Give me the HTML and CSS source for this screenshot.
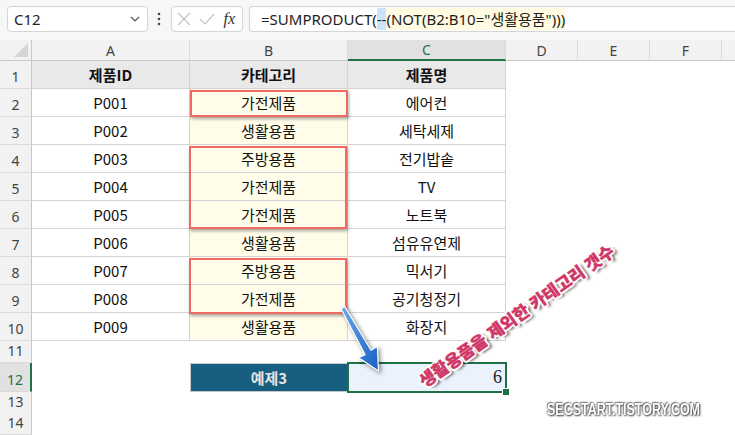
FILE: index.html
```html
<!DOCTYPE html>
<html lang="ko">
<head>
  <meta charset="UTF-8" />
  <meta name="viewport" content="width=device-width, initial-scale=1.0" />
  <title>SUMPRODUCT NOT 예제</title>
  <link rel="stylesheet" href="styles.css">
</head>
<body>

  <div class="formula-bar">
    <div class="name-box">
      <span>C12</span>
      <svg class="chevron" width="10" height="6" viewBox="0 0 10 6"><path d="M1 1 L5 5 L9 1" fill="none" stroke="#555" stroke-width="1.2"/></svg>
    </div>
    <svg class="dots" width="4" height="14" viewBox="0 0 4 14"><circle cx="2" cy="2" r="1.3" fill="#444"/><circle cx="2" cy="7" r="1.3" fill="#444"/><circle cx="2" cy="12" r="1.3" fill="#444"/></svg>
    <div class="fx-box">
      <svg width="14" height="14" viewBox="0 0 14 14"><path d="M1 1 L13 13 M13 1 L1 13" stroke="#c4c4c4" stroke-width="1.2"/></svg>
      <svg width="16" height="12" viewBox="0 0 16 12"><path d="M1 6 L6 11 L15 1" fill="none" stroke="#c4c4c4" stroke-width="1.2"/></svg>
      <span class="fx">fx</span>
    </div>
    <div class="formula">=SUMPRODUCT(<span class="hl-blue">--</span><span class="hl-yellow">(NOT(B2:B10="생활용품")))</span></div>
  </div>

  <div class="sheet">
    <div class="row col-heads">
      <div class="corner"><svg width="14" height="14" viewBox="0 0 14 14"><path d="M14 0 L14 14 L0 14 Z" fill="#d6d6d6"/></svg></div>
      <div class="ch">A</div>
      <div class="ch">B</div>
      <div class="ch active">C</div>
      <div class="ch narrow">D</div>
      <div class="ch narrow">E</div>
      <div class="ch narrow">F</div>
      <div class="ch rest"></div>
    </div>

    <div class="row">
      <div class="rh">1</div>
      <div class="cell head">제품ID</div>
      <div class="cell head">카테고리</div>
      <div class="cell head">제품명</div>
    </div>
    <div class="row">
      <div class="rh">2</div>
      <div class="cell">P001</div>
      <div class="cell cat">가전제품</div>
      <div class="cell">에어컨</div>
    </div>
    <div class="row">
      <div class="rh">3</div>
      <div class="cell">P002</div>
      <div class="cell cat">생활용품</div>
      <div class="cell">세탁세제</div>
    </div>
    <div class="row">
      <div class="rh">4</div>
      <div class="cell">P003</div>
      <div class="cell cat">주방용품</div>
      <div class="cell">전기밥솥</div>
    </div>
    <div class="row">
      <div class="rh">5</div>
      <div class="cell">P004</div>
      <div class="cell cat">가전제품</div>
      <div class="cell">TV</div>
    </div>
    <div class="row">
      <div class="rh">6</div>
      <div class="cell">P005</div>
      <div class="cell cat">가전제품</div>
      <div class="cell">노트북</div>
    </div>
    <div class="row">
      <div class="rh">7</div>
      <div class="cell">P006</div>
      <div class="cell cat">생활용품</div>
      <div class="cell">섬유유연제</div>
    </div>
    <div class="row">
      <div class="rh">8</div>
      <div class="cell">P007</div>
      <div class="cell cat">주방용품</div>
      <div class="cell">믹서기</div>
    </div>
    <div class="row">
      <div class="rh">9</div>
      <div class="cell">P008</div>
      <div class="cell cat">가전제품</div>
      <div class="cell">공기청정기</div>
    </div>
    <div class="row">
      <div class="rh">10</div>
      <div class="cell">P009</div>
      <div class="cell cat">생활용품</div>
      <div class="cell">화장지</div>
    </div>

    <div class="row r11">
      <div class="rh">11</div>
    </div>
    <div class="row r12">
      <div class="rh active">12</div>
      <div class="blank"></div>
      <div class="label">예제3</div>
      <div class="result">6</div>
    </div>
    <div class="row r13">
      <div class="rh">13</div>
    </div>
    <div class="row r14">
      <div class="rh">14</div>
    </div>
  </div>

  <!-- highlights drawn over the grid -->
  <div class="mark mark-b2"></div>
  <div class="mark mark-b4"></div>
  <div class="mark mark-b8"></div>
  <div class="selection"><span class="handle"></span></div>

  <svg class="arrow" width="735" height="435" viewBox="0 0 735 435">
    <defs>
      <linearGradient id="arrowFill" x1="0" y1="0" x2="1" y2="1">
        <stop offset="0" stop-color="#6aa9ea"/>
        <stop offset="1" stop-color="#1760c4"/>
      </linearGradient>
    </defs>
    <polygon points="344.8,306.6 371,350.2 377.4,346.6 378.5,371 358.6,357.8 365,354.6 341,308.8"
             fill="url(#arrowFill)" stroke="#fff" stroke-width="1.2" stroke-linejoin="round"/>
  </svg>

  <div class="callout">생활용품을 제외한 카테고리 갯수</div>
  <div class="watermark">SECSTART.TISTORY.COM</div>

</body>
</html>
```

FILE: styles.css
```css
body {
  margin: 0;
  width: 735px;
  height: 435px;
  overflow: hidden;
  position: relative;
  background: #fff;
  font-family: "Noto Sans CJK KR", sans-serif;
  color: #222;
}

/* formula bar */

.formula-bar {
  height: 40px;
  box-sizing: border-box;
  padding: 6px 0 8px 7px;
  display: flex;
  align-items: stretch;
  background: #f7f7f7;
}

.name-box {
  width: 141px;
  box-sizing: border-box;
  background: #fff;
  border: 1px solid #d4d4d4;
  border-radius: 4px;
  display: flex;
  align-items: center;
  justify-content: space-between;
  padding: 0 7px 0 6px;
  font: 15px "Noto Sans", sans-serif;
  color: #222;
}

.dots {
  align-self: center;
  margin: 0 10px 0 9px;
}

.fx-box {
  width: 72px;
  box-sizing: border-box;
  background: #fff;
  border: 1px solid #d4d4d4;
  border-radius: 4px;
  display: flex;
  align-items: center;
  justify-content: space-between;
  padding: 0 7px 0 5px;
}

.fx {
  font: italic 16px "Liberation Serif", serif;
  color: #333;
}

.formula {
  flex: 1;
  margin-left: 6px;
  background: #fff;
  border: 1px solid #d4d4d4;
  border-right: none;
  border-radius: 4px 0 0 4px;
  display: flex;
  align-items: center;
  padding-left: 11px;
  font: 15px "Noto Sans", "Noto Sans CJK KR", sans-serif;
  color: #222;
  white-space: nowrap;
}

.hl-blue,
.hl-yellow {
  display: inline-block;
  line-height: 22px;
}

.hl-blue {
  background: #cce3f7;
}

.hl-yellow {
  background: #fffbe3;
}

/* grid */

.sheet {
  display: flex;
  flex-direction: column;
}

.row {
  display: grid;
  grid-template-columns: 32px 158px 158px 158px 1fr;
  height: 28px;
}

.col-heads {
  grid-template-columns: 32px 158px 158px 158px 72px 72px 72px 1fr;
  height: 21px;
}

.r11 { height: 22px; }
.r12 { height: 29px; }
.r13 { height: 21px; }
.r14 { height: 22px; }

.corner {
  background: #f2f2f2;
  border-right: 1px solid #c8c8c8;
  border-bottom: 1px solid #c8c8c8;
  display: flex;
  align-items: flex-end;
  justify-content: flex-end;
  padding: 0 3px 3px 0;
}

.ch {
  background: #f2f2f2;
  border-right: 1px solid #dadada;
  border-bottom: 1px solid #c8c8c8;
  display: flex;
  align-items: center;
  justify-content: center;
  font: 14px "Noto Sans", sans-serif;
  color: #444;
}

.ch.rest {
  border-right: none;
}

.ch.active {
  background: #e1e1e1;
  border-bottom: 2px solid #217346;
  color: #217346;
}

.rh {
  background: #f2f2f2;
  border-right: 1px solid #c8c8c8;
  border-bottom: 1px solid #dadada;
  display: flex;
  align-items: flex-end;
  justify-content: center;
  padding-bottom: 2px;
  box-sizing: border-box;
  font: 14px "Noto Sans", sans-serif;
  color: #444;
}

.rh.active {
  background: #e1e1e1;
  border-right: 2px solid #217346;
  color: #217346;
}

.cell {
  box-sizing: border-box;
  border-right: 1px solid #d4d4d4;
  border-bottom: 1px solid #d4d4d4;
  display: flex;
  align-items: center;
  justify-content: center;
  font-size: 15px;
  color: #111;
}

.cell.head {
  background: #e9e9e9;
  font-weight: bold;
}

.cell.cat {
  background: #fffde9;
}

.label {
  box-sizing: border-box;
  background: #175e7f;
  border: 1px solid #c8c8c8;
  display: flex;
  align-items: center;
  justify-content: center;
  font-size: 15px;
  font-weight: bold;
  color: #e6e6e6;
}

.result {
  background: #eaf3fd;
  display: flex;
  align-items: center;
  justify-content: flex-end;
  padding-right: 4px;
  font: 18px "Liberation Serif", serif;
  color: #222;
}

/* overlays */

.mark {
  position: absolute;
  box-sizing: border-box;
  border: 2px solid #f06a61;
  box-shadow: 1px 2px 3px rgba(0, 0, 0, 0.35);
}

.mark-b2 { left: 190px; top: 90px; width: 158px; height: 27px; }
.mark-b4 { left: 189px; top: 146px; width: 158px; height: 83px; }
.mark-b8 { left: 189px; top: 258px; width: 158px; height: 56px; }

.selection {
  position: absolute;
  left: 347px;
  top: 362px;
  width: 160px;
  height: 31px;
  box-sizing: border-box;
  border: 2px solid #1e7145;
}

.handle {
  position: absolute;
  right: -5px;
  bottom: -5px;
  width: 6px;
  height: 6px;
  background: #1e7145;
  border: 1px solid #fff;
}

.arrow {
  position: absolute;
  left: 0;
  top: 0;
  filter: drop-shadow(2px 2px 2px rgba(0, 0, 0, 0.45));
}

.callout {
  position: absolute;
  left: 516px;
  top: 315px;
  transform: translate(-50%, -50%) rotate(-35deg);
  white-space: nowrap;
  font-size: 17px;
  font-weight: 900;
  color: #cf3766;
  -webkit-text-stroke: 0.4px #cf3766;
  text-shadow:
    2px 0 0 #fff, -2px 0 0 #fff, 0 2px 0 #fff, 0 -2px 0 #fff,
    1.5px 1.5px 0 #fff, -1.5px -1.5px 0 #fff, 1.5px -1.5px 0 #fff, -1.5px 1.5px 0 #fff,
    3px 3px 3px rgba(0, 0, 0, 0.75);
}

.watermark {
  position: absolute;
  left: 547px;
  top: 401px;
  transform: scaleX(0.78);
  transform-origin: left center;
  white-space: nowrap;
  font: bold 16px "Liberation Sans", sans-serif;
  color: #fff;
  text-shadow: 1px 1px 2px #444, 0 0 3px #666, -1px -1px 1px #888;
}
```
